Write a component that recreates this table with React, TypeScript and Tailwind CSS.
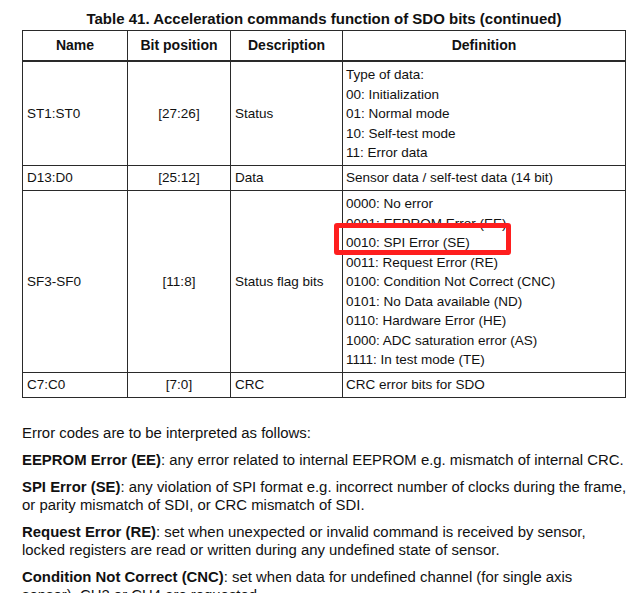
import React from "react";

const cellText = "text-[13.5px] leading-[19.5px] text-[#111]";

function Cell({
  children,
  className = "",
}: {
  children?: React.ReactNode;
  className?: string;
}) {
  return <div className={`border-b border-[#2a2a2a] ${className}`}>{children}</div>;
}

export default function App() {
  const font = { fontFamily: '"Liberation Sans", Arial, sans-serif' };
  return (
    <div className="w-[630px] h-[593px] overflow-hidden bg-white text-[#111]" style={font}>
      <div className="pt-[10px] w-[604px] ml-[22px]">
        <div className="text-center font-bold text-[15px] leading-[17px] mb-[3px] whitespace-nowrap">
          Table 41. Acceleration commands function of SDO bits (continued)
        </div>
        <div className="grid grid-cols-[105px_103px_112px_282px] border-t border-l border-r border-[#2a2a2a]">
          {/* header */}
          <div className="h-[31px] border-b-2 border-r border-[#2a2a2a] flex items-center justify-center font-bold text-[14px]">Name</div>
          <div className="h-[31px] border-b-2 border-r border-[#2a2a2a] flex items-center justify-center font-bold text-[14px]">Bit position</div>
          <div className="h-[31px] border-b-2 border-r border-[#2a2a2a] flex items-center justify-center font-bold text-[14px]">Description</div>
          <div className="h-[31px] border-b-2 border-[#2a2a2a] flex items-center justify-center font-bold text-[14px]">Definition</div>

          {/* ST row */}
          <Cell className={`h-[104px] border-r flex items-center pl-[4px] ${cellText}`}>ST1:ST0</Cell>
          <Cell className={`h-[104px] border-r flex items-center justify-center ${cellText}`}>[27:26]</Cell>
          <Cell className={`h-[104px] border-r flex items-center pl-[4px] ${cellText}`}>Status</Cell>
          <Cell className={`h-[104px] pt-[3px] pl-[3px] ${cellText}`}>
            <div>Type of data:</div>
            <div>00: Initialization</div>
            <div>01: Normal mode</div>
            <div>10: Self-test mode</div>
            <div>11: Error data</div>
          </Cell>

          {/* D13 row */}
          <Cell className={`h-[25px] border-r flex items-center pl-[4px] ${cellText}`}>D13:D0</Cell>
          <Cell className={`h-[25px] border-r flex items-center justify-center ${cellText}`}>[25:12]</Cell>
          <Cell className={`h-[25px] border-r flex items-center pl-[4px] ${cellText}`}>Data</Cell>
          <Cell className={`h-[25px] flex items-center pl-[3px] ${cellText}`}>Sensor data / self-test data (14 bit)</Cell>

          {/* SF row */}
          <Cell className={`h-[182px] border-r flex items-center pl-[4px] ${cellText}`}>SF3-SF0</Cell>
          <Cell className={`h-[182px] border-r flex items-center justify-center ${cellText}`}>[11:8]</Cell>
          <Cell className={`h-[182px] border-r flex items-center pl-[4px] ${cellText}`}>Status flag bits</Cell>
          <Cell className={`relative h-[182px] pt-[3px] pl-[3px] ${cellText}`}>
            <div>0000: No error</div>
            <div>0001: EEPROM Error (EE)</div>
            <div>0010: SPI Error (SE)</div>
            <div>0011: Request Error (RE)</div>
            <div>0100: Condition Not Correct (CNC)</div>
            <div>0101: No Data available (ND)</div>
            <div>0110: Hardware Error (HE)</div>
            <div>1000: ADC saturation error (AS)</div>
            <div>1111: In test mode (TE)</div>
            <div className="absolute left-[-9px] top-[32px] w-[177px] h-[32px] border-[5px] border-[#fe1e1e] rounded-[3px]" />
          </Cell>

          {/* C7 row */}
          <Cell className={`h-[25px] border-r flex items-center pl-[4px] ${cellText}`}>C7:C0</Cell>
          <Cell className={`h-[25px] border-r flex items-center justify-center ${cellText}`}>[7:0]</Cell>
          <Cell className={`h-[25px] border-r flex items-center pl-[4px] ${cellText}`}>CRC</Cell>
          <Cell className={`h-[25px] flex items-center pl-[3px] ${cellText}`}>CRC error bits for SDO</Cell>
        </div>

        <div className="mt-[26px] text-[14.9px] leading-[18px] whitespace-nowrap flex flex-col gap-[9px]">
          <p>Error codes are to be interpreted as follows:</p>
          <p>
            <b>EEPROM Error (EE)</b>: any error related to internal EEPROM e.g. mismatch of internal CRC.
          </p>
          <p>
            <b>SPI Error (SE)</b>: any violation of SPI format e.g. incorrect number of clocks during the frame,
            <br />
            or parity mismatch of SDI, or CRC mismatch of SDI.
          </p>
          <p>
            <b>Request Error (RE)</b>: set when unexpected or invalid command is received by sensor,
            <br />
            locked registers are read or written during any undefined state of sensor.
          </p>
          <p>
            <b>Condition Not Correct (CNC)</b>: set when data for undefined channel (for single axis
            <br />
            sensor), CH2 or CH4 are requested.
          </p>
        </div>
      </div>
    </div>
  );
}
